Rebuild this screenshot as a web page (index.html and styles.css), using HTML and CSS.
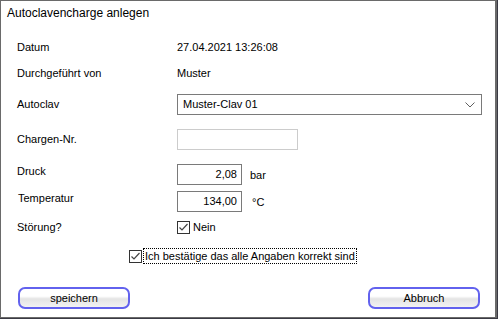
FILE: index.html
```html
<!DOCTYPE html>
<html lang="de">
<head>
    <meta charset="UTF-8">
    <title>Autoclavencharge anlegen</title>
    <link rel="stylesheet" href="styles.css">
</head>
<body>
    <div class="window">
        <div class="title">Autoclavencharge anlegen</div>

        <div class="row row-datum">
            <span class="label">Datum</span>
            <span class="value">27.04.2021 13:26:08</span>
        </div>
        <div class="row row-user">
            <span class="label">Durchgeführt von</span>
            <span class="value">Muster</span>
        </div>
        <div class="row row-clav">
            <span class="label">Autoclav</span>
            <div class="select">
                <span>Muster-Clav 01</span>
                <svg class="chevron" width="10" height="6" viewBox="0 0 10 6">
                    <path d="M0.5 0.5 L5 5 L9.5 0.5" fill="none" stroke="#606060" stroke-width="1"/>
                </svg>
            </div>
        </div>
        <div class="row row-charge">
            <span class="label">Chargen-Nr.</span>
            <div class="input input-light"></div>
        </div>
        <div class="row row-druck">
            <span class="label label-up">Druck</span>
            <div class="input input-num">2,08</div>
            <span class="unit">bar</span>
        </div>
        <div class="row row-temp">
            <span class="label label-up label-temp">Temperatur</span>
            <div class="input input-num">134,00</div>
            <span class="unit unit-temp">°C</span>
        </div>
        <div class="row row-stoer">
            <span class="label">Störung?</span>
            <span class="check">
                <svg width="13" height="13" viewBox="0 0 13 13">
                    <rect x="0.5" y="0.5" width="12" height="12" fill="#fff" stroke="#333"/>
                    <path d="M2.5 6.5 L5 9 L10.5 3" fill="none" stroke="#444" stroke-width="1.2"/>
                </svg>
            </span>
            <span class="check-text">Nein</span>
        </div>
        <div class="row row-confirm">
            <span class="check">
                <svg width="13" height="13" viewBox="0 0 13 13">
                    <rect x="0.5" y="0.5" width="12" height="12" fill="#fff" stroke="#333"/>
                    <path d="M2.5 6.5 L5 9 L10.5 3" fill="none" stroke="#444" stroke-width="1.2"/>
                </svg>
            </span>
            <span class="focus">Ich bestätige das alle Angaben korrekt sind</span>
        </div>
        <div class="buttons">
            <button class="button">speichern</button>
            <button class="button">Abbruch</button>
        </div>
    </div>
</body>
</html>
```

FILE: styles.css
```css
/* Dialog window */
body {
    margin: 0;
    background-color: #3a3a44;
    font-family: "Liberation Sans", Arial, sans-serif;
    font-size: 11px;
    color: #000;
}
.window {
    width: 494px;
    height: 316px;
    background-color: #fff;
    border-left: 1px solid #6a6a6a;
    border-top: 1px solid #6a6a6a;
    border-right: 2px solid #6a6a6a;
    border-bottom: 1px solid #6a6a6a;
    display: flex;
    flex-direction: column;
}
.title {
    height: 25px;
    line-height: 25px;
    padding-left: 6px;
    font-size: 12px;
}
.row {
    display: flex;
    align-items: center;
    padding-left: 16px;
}
.label {
    width: 160px;
}
.row-datum {
    margin-top: 10px;
    height: 22px;
}
.row-user {
    margin-top: 4px;
    height: 22px;
}
.row-clav {
    margin-top: 9px;
    height: 22px;
}
.row-charge {
    margin-top: 13px;
    height: 22px;
}
.row-druck {
    margin-top: 14px;
    height: 21px;
}
.row-temp {
    margin-top: 6px;
    height: 21px;
}
.row-stoer {
    margin-top: 5px;
    height: 20px;
}
.row-confirm {
    margin-top: 9px;
    height: 20px;
    padding-left: 128px;
}
.label-up {
    position: relative;
    top: -4px;
}
.label-temp {
    padding-left: 1px;
    width: 159px;
}
.select {
    box-sizing: border-box;
    width: 305px;
    height: 21px;
    border: 1px solid #7a7a7a;
    display: flex;
    align-items: center;
    justify-content: space-between;
    padding: 0 6px 0 5px;
}
.chevron {
    margin-top: 1px;
}
.input {
    box-sizing: border-box;
    height: 21px;
    border: 1px solid #7a7a7a;
}
.input-light {
    width: 121px;
    border-color: #cccccc;
}
.input-num {
    width: 65px;
    text-align: right;
    line-height: 19px;
    padding-right: 4px;
}
.unit {
    margin-left: 8px;
}
.unit-temp {
    margin-left: 10px;
}
.check {
    display: flex;
    width: 13px;
    height: 13px;
}
.check-text {
    margin-left: 3px;
}
.focus {
    margin-left: 1px;
    padding: 1px 1px;
    border: 1px dotted #000;
}
.buttons {
    display: flex;
    justify-content: space-between;
    padding: 0 15px 0 17px;
    margin-top: 21px;
}
.button {
    box-sizing: border-box;
    width: 112px;
    height: 22px;
    border: 2px solid #6262ee;
    border-radius: 7px;
    background: linear-gradient(#ffffff 0%, #ffffff 40%, #e4e4e4 55%, #f2f2f2 100%);
    font-family: "Liberation Sans", Arial, sans-serif;
    font-size: 11px;
    color: #000;
    padding: 0;
}
```
